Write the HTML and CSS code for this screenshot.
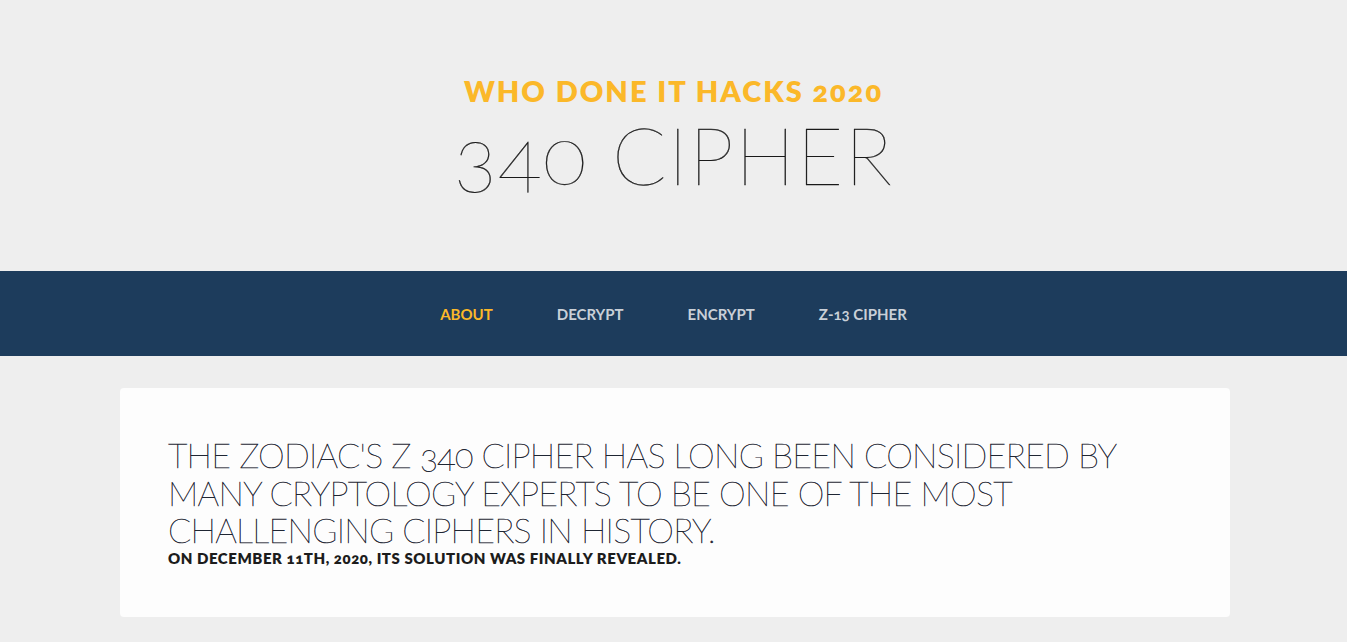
FILE: index.html
```html
<!DOCTYPE html>
<html lang="en">
<head>
<meta charset="utf-8">
<title>340 Cipher</title>
<link rel="stylesheet" href="styles.css">
</head>
<body>
<header class="masthead">
  <h2 class="event">WHO DONE IT HACKS 2020</h2>
  <h1 class="title">340 CIPHER</h1>
</header>
<nav class="nav">
  <a class="nav-link active" href="#">ABOUT</a>
  <a class="nav-link" href="#">DECRYPT</a>
  <a class="nav-link" href="#">ENCRYPT</a>
  <a class="nav-link" href="#">Z-13 CIPHER</a>
</nav>
<main class="content">
  <section class="card">
    <p class="lead">THE ZODIAC'S Z 340 CIPHER HAS LONG BEEN CONSIDERED BY<br>MANY CRYPTOLOGY EXPERTS TO BE ONE OF THE MOST<br>CHALLENGING CIPHERS IN HISTORY.</p>
    <p class="sub">ON DECEMBER 11TH, 2020, ITS SOLUTION WAS FINALLY REVEALED.</p>
  </section>
</main>
</body>
</html>
```
FILE: styles.css
```css
html, body {
  margin: 0;
  padding: 0;
}
body {
  background: #eeeeee;
  font-family: Lato, "Open Sans", sans-serif;
  font-variant-numeric: oldstyle-nums;
  color: #1c1c1c;
}
.masthead {
  height: 271px;
  box-sizing: border-box;
  padding-top: 74px;
  text-align: center;
}
.event {
  margin: 0;
  font-size: 29px;
  line-height: 34px;
  font-weight: 800;
  color: #fbb829;
  letter-spacing: 2px;
}
.title {
  margin: 1px 0 0;
  font-size: 80px;
  line-height: 90px;
  font-weight: 100;
  color: #1a1a1a;
  -webkit-text-stroke: 0.3px #1a1a1a;
  letter-spacing: 1.5px;
}
.nav {
  height: 85px;
  background: #1d3c5c;
  display: flex;
  justify-content: center;
  align-items: center;
  gap: 64px;
}
.nav-link {
  font-size: 15px;
  font-weight: 700;
  color: #c9d0d8;
  text-decoration: none;
}
.nav-link.active {
  color: #fbb829;
}
.content {
  padding: 32px 117px 0 120px;
}
.card {
  background: #fdfdfd;
  border-radius: 4px;
  height: 229px;
  box-sizing: border-box;
  padding: 48px 48px 0;
}
.lead {
  margin: 0;
  font-size: 34px;
  line-height: 37.5px;
  font-weight: 100;
  color: #1f2633;
  -webkit-text-stroke: 0.45px #1f2633;
  letter-spacing: -0.75px;
}
.sub {
  margin: 0;
  font-size: 15px;
  line-height: 18px;
  font-weight: 800;
  color: #1c1c1c;
  letter-spacing: 0.55px;
}
```
